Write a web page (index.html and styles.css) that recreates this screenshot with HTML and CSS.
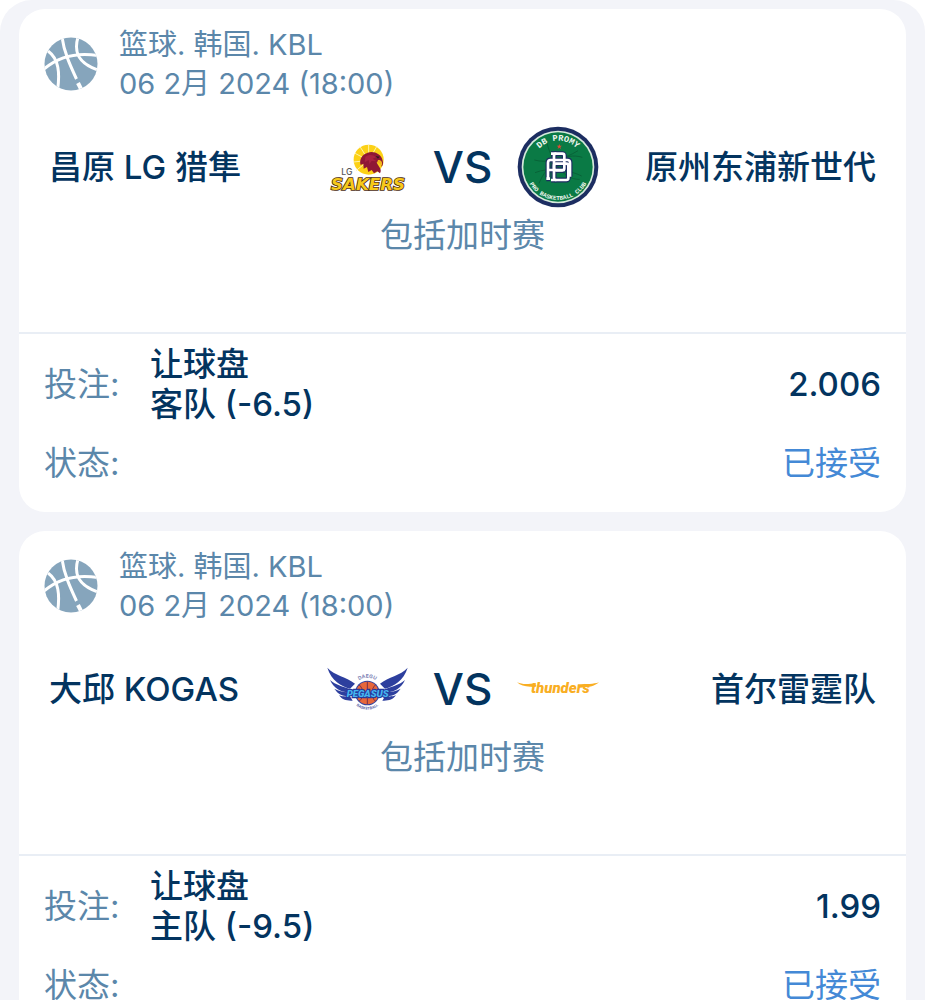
FILE: index.html
```html
<!DOCTYPE html>
<html lang="zh-CN">
<head>
  <meta charset="UTF-8" />
  <meta name="viewport" content="width=device-width, initial-scale=1" />
  <title>投注记录</title>
  <link rel="stylesheet" href="styles.css">
</head>
<body>
  <svg class="sprite" width="0" height="0" aria-hidden="true">
    <symbol id="basketball" viewBox="0 0 54 54">
      <clipPath id="ball-clip"><circle cx="27" cy="27" r="26.5" /></clipPath>
      <g clip-path="url(#ball-clip)">
        <rect width="54" height="54" fill="#86a5bc" />
        <g fill="none" stroke="#fff" stroke-width="3">
          <path d="M0 32C14 20 32 15 54 18.500" />
          <path d="M18 0C20 15 26 28 32.500 42" />
          <path d="M4 14C15 22 16 36 13.500 54" />
          <path d="M34 0C29 17 36 27 54 33" />
          <path d="M34 46L38 54" stroke-width="4" />
        </g>
      </g>
    </symbol>
  </svg>

  <main class="bets">
    <article class="card">
      <header>
        <svg class="sport" aria-hidden="true"><use href="#basketball" /></svg>
        <div class="league">
          <p>篮球. 韩国. KBL</p>
          <p>06 2月 2024 (18:00)</p>
        </div>
      </header>

      <div class="match">
        <span class="team">昌原 LG 猎隼</span>
        <div class="versus">
          <!-- LG Sakers -->
          <svg class="logo" viewBox="18 -12 246 246" role="img" aria-label="LG Sakers">
            <circle cx="146" cy="89" r="45" fill="#fcd116" />
            <g stroke="#fff3a8" stroke-width="3">
              <path d="M146 91L120 50M146 91L146 44M146 91L170 50M146 91L105 70M146 91L101 96M146 91L108 122" />
            </g>
            <path d="M188 92C183 70 160 62 143 68C124 74 117 91 122 105L130 101L131 116L141 111L145 126L155 120L162 130L172 124L180 130C188 119 174 108 170 97C177 94 184 98 184 110C190 106 190 98 188 92Z" fill="#8f1735" />
            <path d="M136 80C148 72 160 74 168 82L158 86L170 94L155 93L148 102L146 90L134 97Z" fill="#a72140" />
            <path d="M167 78L179 80L174 86Z" fill="#311824" />
            <path d="M174 90C184 89 189 97 185 108C183 102 178 100 171 98Z" fill="#f2b51c" />
            <text class="lg" x="64" y="134">LG</text>
            <text class="sakers" x="144" y="180">SAKERS</text>
          </svg>
          <strong>VS</strong>
          <!-- DB Promy -->
          <svg class="logo" viewBox="22 18 246 246" role="img" aria-label="DB Promy">
            <defs>
              <g id="crest">
                <rect x="133" y="101" width="31" height="50" rx="6" />
                <rect x="133" y="131" width="43" height="49" rx="6" />
                <path d="M124 101H140M124 180H140" />
                <path d="M115 176V128Q115 120 123 120H173Q181 120 181 128V170M110 176H121M119 150H166" />
              </g>
            </defs>
            <circle cx="145" cy="141" r="121" fill="#1c2d61" />
            <circle cx="145" cy="141" r="109" fill="#d5e9db" />
            <circle cx="145" cy="141" r="104" fill="#0a7a45" />
            <g fill="none" stroke="#086338" stroke-width="3">
              <path d="M74 120C110 130 160 120 205 92M88 190C110 135 165 95 218 112M112 70C125 120 160 180 210 178M76 158C120 140 180 150 216 168" />
            </g>
            <path id="arc-top" d="M66 141A79 79 0 0 1 224 141" fill="none" />
            <path id="arc-bottom" d="M46 141A99 99 0 0 0 244 141" fill="none" />
            <text class="ring ring-top"><textPath href="#arc-top" startOffset="50%">DB PROMY</textPath></text>
            <text class="ring ring-bottom"><textPath href="#arc-bottom" startOffset="50%">PRO BASKETBALL CLUB</textPath></text>
            <path d="M149 72L151 77L157 77L152 81L154 87L149 83L144 87L146 81L141 77L147 77Z" fill="#df4933" />
            <use href="#crest" class="crest-edge" />
            <use href="#crest" class="crest-face" />
          </svg>
        </div>
        <span class="team away">原州东浦新世代</span>
      </div>
      <p class="note">包括加时赛</p>

      <dl>
        <div class="row">
          <dt>投注:</dt>
          <dd class="pick">让球盘<br>客队 (-6.5)</dd>
          <dd class="odds">2.006</dd>
        </div>
        <div class="row">
          <dt>状态:</dt>
          <dd class="state">已接受</dd>
        </div>
      </dl>
    </article>

    <article class="card">
      <header>
        <svg class="sport" aria-hidden="true"><use href="#basketball" /></svg>
        <div class="league">
          <p>篮球. 韩国. KBL</p>
          <p>06 2月 2024 (18:00)</p>
        </div>
      </header>

      <div class="match">
        <span class="team">大邱 KOGAS</span>
        <div class="versus">
          <!-- Pegasus -->
          <svg class="logo" viewBox="18 -21 246 246" role="img" aria-label="Pegasus">
            <path id="arc-daegu" d="M99 100A45 45 0 0 1 185 100" fill="none" />
            <text class="daegu"><textPath href="#arc-daegu" startOffset="50%">DAEGU</textPath></text>
            <g id="wing" fill="#2d3f9e">
              <path d="M22 38C44 62 80 66 105 86L90 101C64 94 34 77 22 38Z" />
              <path d="M30 75C48 90 66 94 86 101L84 112C62 111 42 100 30 75Z" />
              <path d="M43 101C56 108 68 111 84 112L84 123C66 123 54 117 43 101Z" />
              <path d="M57 121C66 125 76 125 90 124L98 137C80 138 66 134 57 121Z" />
            </g>
            <use href="#wing" transform="matrix(-1 0 0 1 285 0)" />
            <circle cx="142" cy="114" r="37" fill="#3042a0" />
            <circle cx="142" cy="114" r="34" fill="#e7673b" />
            <g fill="none" stroke="#782f48" stroke-width="3">
              <path d="M142 80V148M108 114H176M118 90C132 103 132 127 118 138M166 90C152 103 152 127 166 138" />
            </g>
            <text class="pegasus" x="143" y="127">PEGASUS</text>
            <path id="arc-base" d="M94 128A50 50 0 0 0 190 128" fill="none" />
            <text class="base"><textPath href="#arc-base" startOffset="50%">BASKETBALL</textPath></text>
          </svg>
          <strong>VS</strong>
          <!-- Thunders -->
          <svg class="logo" viewBox="22 -51 246 246" role="img" aria-label="Thunders">
            <g fill="#f9ae22">
              <path d="M22 52C38 59 52 58 79 55L77 64C51 67 35 63 22 52Z" />
              <path d="M268 52C251 58 232 57 204 58L205 67C237 68 254 64 268 52Z" />
            </g>
            <text class="thunders" x="152" y="84">thunders</text>
          </svg>
        </div>
        <span class="team away">首尔雷霆队</span>
      </div>
      <p class="note">包括加时赛</p>

      <dl>
        <div class="row">
          <dt>投注:</dt>
          <dd class="pick">让球盘<br>主队 (-9.5)</dd>
          <dd class="odds">1.99</dd>
        </div>
        <div class="row">
          <dt>状态:</dt>
          <dd class="state">已接受</dd>
        </div>
      </dl>
    </article>
  </main>
</body>
</html>
```

FILE: styles.css
```css
* {
  margin: 0;
  padding: 0;
  box-sizing: border-box;
}
body {
  background: #fff;
  color: #03345f;
  font-family: Inter, 'Noto Sans CJK SC', sans-serif;
  font-size: 33px;
  line-height: 40px;
}
.sprite {
  position: absolute;
}

.bets {
  display: flex;
  flex-direction: column;
  gap: 19px;
  padding: 9px 19px;
  background: #f3f4f9;
  border-radius: 32px 32px 0 0;
}
.card {
  background: #fff;
  border-radius: 26px;
  padding: 16px 0 29px;
}

header {
  display: flex;
  align-items: center;
  gap: 21px;
  padding: 0 25px;
}
.sport {
  width: 54px;
  height: 54px;
}
.league {
  color: #5b87aa;
  font-size: 29px;
  line-height: 39px;
}

/* Teams */
.match {
  display: grid;
  grid-template-columns: 1fr auto 1fr;
  align-items: center;
  margin-top: 23px;
  padding: 0 30px;
}
.team {
  font-weight: 500;
}
.away {
  text-align: right;
}
.versus {
  display: flex;
  align-items: center;
  gap: 25px;
}
.versus strong {
  font-size: 44px;
  font-weight: 500;
}
.logo {
  width: 82px;
  height: 82px;
}
.note {
  margin-top: 7px;
  padding-bottom: 77px;
  color: #5b87aa;
  text-align: center;
}

/* Bet details */
dl {
  display: flex;
  flex-direction: column;
  gap: 19px;
  padding: 10px 25px 0;
  border-top: 2px solid #e9eef5;
}
.row {
  display: flex;
  align-items: center;
}
dt {
  width: 106px;
  color: #5b87aa;
}
.pick,
.odds {
  font-weight: 500;
}
.odds,
.state {
  margin-left: auto;
}
.state {
  color: #4489d6;
}

/* Logo lettering */
.logo text {
  text-anchor: middle;
}
.logo .lg {
  fill: #55565a;
  font: 500 26px Inter, sans-serif;
  text-anchor: start;
}
.sakers {
  fill: #f7c91b;
  stroke: #4b2b12;
  stroke-width: 5px;
  paint-order: stroke;
  font: italic 700 50px 'DejaVu Sans', sans-serif;
}
.ring {
  fill: #eef6ef;
}
.ring-top {
  font: 700 26px 'Liberation Mono', monospace;
}
.ring-bottom {
  font: 700 18px 'Liberation Mono', monospace;
}
.crest-edge {
  fill: none;
  stroke: #1c2d61;
  stroke-width: 15px;
}
.crest-face {
  fill: none;
  stroke: #fff;
  stroke-width: 8px;
}
.daegu {
  fill: #7d83b5;
  font: 700 15px Inter, sans-serif;
}
.base {
  fill: #5965a8;
  font: 700 11px Inter, sans-serif;
}
.pegasus {
  fill: #45b5ef;
  stroke: #263a9c;
  stroke-width: 7px;
  paint-order: stroke;
  font: italic 900 29px Roboto, sans-serif;
}
.thunders {
  fill: #f9ae22;
  font: italic 900 45px Roboto, sans-serif;
}
```
